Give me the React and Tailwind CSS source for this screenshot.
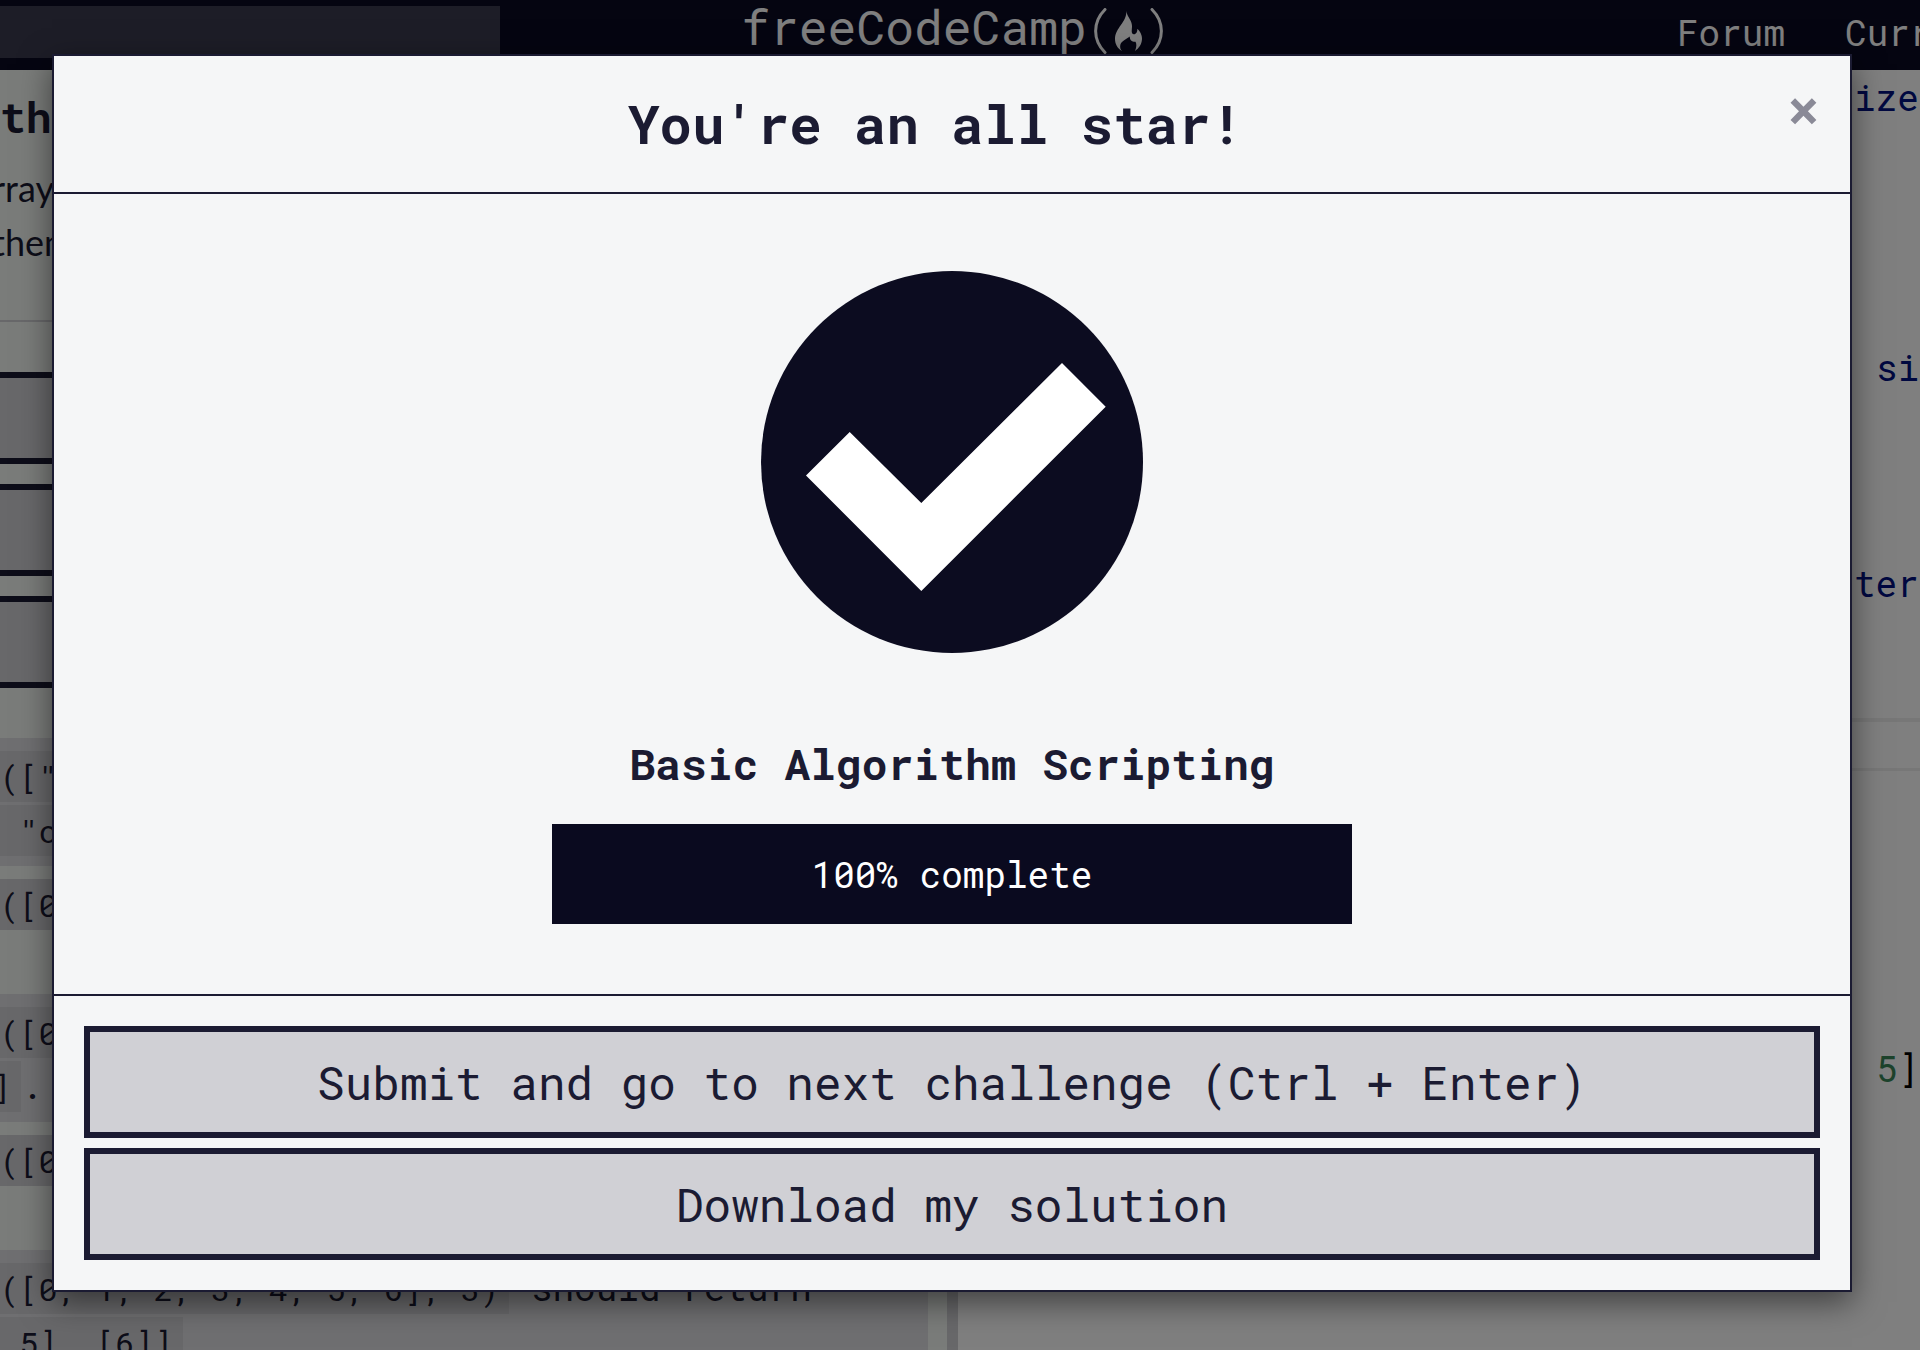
import React from 'react';

function FlameMark() {
  return (
    <svg viewBox="0 0 69 46" className="h-[46px] w-[69px]" aria-hidden="true">
      <g fill="none" stroke="#ffffff" strokeWidth="3" strokeLinecap="round">
        <path d="M11 1.5 C-1.5 14 -1.5 32 11 44.5" />
        <path d="M58 1.5 C70.5 14 70.5 32 58 44.5" />
      </g>
      <path
        fill="#ffffff"
        d="M32.3 3 C33 9 38 12 38 18 C38 22 36.8 25.5 39.5 26.2 C42 26.5 43.5 24 43.3 20.7 C46 23 48.2 27 48 31 C47.7 36.5 45 40 41 43 C42.6 39 42.8 36 41.5 33.8 C38 34 35.6 32 35.8 28.5 C32 31.5 27 33.5 26.3 37 C25.8 39.5 26.5 41.5 28 43 C23.5 40.5 21 36 21 31 C21 20 33 14 32.3 3 Z"
      />
    </svg>
  );
}

function CheckMark() {
  return (
    <svg viewBox="0 0 382 382" className="size-[382px]" role="img" aria-label="Passed">
      <circle cx="191" cy="191" r="191" fill="#0c0c20" />
      <path fill="#ffffff" d="M45 204.5 L88.7 161 L160.3 232 L301 92 L344.7 135.7 L160.3 320 Z" />
    </svg>
  );
}

function Code({ children }) {
  return <code className='bg-[#d0d0d5] py-1 pr-[10px] font-["Roboto_Mono","Liberation_Mono",monospace] text-[32px] leading-none'>{children}</code>;
}

function TestCase({ shaded, children }) {
  return (
    <li className={shaded ? 'min-h-[128px] bg-[#dfdfe2] py-[10px]' : 'min-h-[128px] py-[10px]'}>{children}</li>
  );
}

function Header() {
  return (
    <header className="grid h-[70px] shrink-0 grid-cols-[500px_1fr_516px] items-start bg-[#0a0a23] text-white">
      <div className="pt-[6px]">
        <input type="search" aria-label="Search" className="block h-[52px] w-full bg-[#3b3b4f]" />
      </div>
      <a href="#home" className="flex items-start justify-center gap-[7px]">
        <span className="text-[48px] leading-[54px]">freeCodeCamp</span>
        <span className="pt-2">
          <FlameMark />
        </span>
      </a>
      <nav className="flex gap-[60px] overflow-hidden pl-[273px] leading-[64px]">
        <a href="#forum">Forum</a>
        <a href="#curriculum">Curriculum</a>
      </nav>
    </header>
  );
}

function Instructions() {
  return (
    <section className="min-w-0 flex-1 overflow-hidden bg-[#f5f8f5] pr-[19px]">
      <h1 className="pt-5 text-[43px] font-bold">th</h1>
      <p className='-ml-2 mt-[17px] font-["Lato",sans-serif]'>
        rray
        <br />
        them
      </p>
      <hr className="mt-[51px] border-t-2 border-[#d0d0d5]" />
      <div className="my-[50px] flex flex-col gap-5">
        <button type="button" aria-label="Run the tests" className="h-[92px] border-y-[6px] border-[#1b1b32] bg-[#d0d0d5]" />
        <button type="button" aria-label="Reset all code" className="h-[92px] border-y-[6px] border-[#1b1b32] bg-[#d0d0d5]" />
        <button type="button" aria-label="Get help" className="h-[92px] border-y-[6px] border-[#1b1b32] bg-[#d0d0d5]" />
      </div>
      <ul className="whitespace-pre">
        <TestCase shaded>
          <Code>{'(["a'}</Code>
          <br />
          <Code>{' "c"'}</Code>
        </TestCase>
        <TestCase>
          <Code>{'([0,'}</Code>
        </TestCase>
        <TestCase shaded>
          <Code>{'([0,'}</Code>
          <br />
          <span className="-ml-2">
            <Code>]</Code>.
          </span>
        </TestCase>
        <TestCase>
          <Code>{'([0,'}</Code>
        </TestCase>
        <TestCase shaded>
          <Code>{'([0, 1, 2, 3, 4, 5, 6], 3)'}</Code>
          {' should return'}
          <br />
          <Code>{' 5], [6]]'}</Code>.
        </TestCase>
      </ul>
    </section>
  );
}

function Editor() {
  return (
    <section className="flex w-[962px] shrink-0 flex-col overflow-hidden bg-white text-[#001080]">
      <div className="h-[648px] shrink-0 pl-[896px]">
        <p>ize</p>
        <p className="mt-[216px] pl-[22px]">si</p>
        <p className="mt-[162px]">ter</p>
      </div>
      <div className="h-[53px] shrink-0 border-t-4 border-b-[3px] border-[#eeeeee]" />
      <div className="pt-[270px] pl-[918px]">
        <p className="text-black">
          <span className="text-[#3a8658]">5</span>]
        </p>
      </div>
    </section>
  );
}

function CompletionDialog() {
  return (
    <div
      role="dialog"
      aria-modal="true"
      aria-labelledby="dialog-title"
      className="border-2 border-[#1b1b32] bg-[#f5f6f7] shadow-[0_10px_30px_rgba(0,0,0,0.5)]"
    >
      <div className="flex items-start border-b-2 border-[#1b1b32] px-[30px] pt-[29px] pb-[31px]">
        <h2 id="dialog-title" className="flex-1 text-center text-[54px] leading-[76px] font-bold">
          You're an all star!
        </h2>
        <button type="button" aria-label="Close" className="w-[34px] text-center text-[56px] leading-[46px] font-bold text-[#8a8a97]">
          ×
        </button>
      </div>
      <div className="flex flex-col items-center border-b-2 border-[#1b1b32] pt-[77px] pb-[70px]">
        <CheckMark />
        <h3 className="mt-[84px] text-[43px] font-bold">Basic Algorithm Scripting</h3>
        <div
          role="progressbar"
          aria-valuenow={100}
          aria-label="Block progress"
          className="mt-[33px] w-[800px] max-w-full bg-[#0a0a1f] text-center leading-[100px] text-white"
        >
          100% complete
        </div>
      </div>
      <div className="flex flex-col gap-[10px] p-[30px] text-[46px] leading-[100px]">
        <button type="button" className="border-[6px] border-[#1b1b32] bg-[#d0d0d5]">
          Submit and go to next challenge (Ctrl + Enter)
        </button>
        <button type="button" className="border-[6px] border-[#1b1b32] bg-[#d0d0d5]">
          Download my solution
        </button>
      </div>
    </div>
  );
}

export default function App() {
  return (
    <div className='relative flex h-screen flex-col overflow-hidden font-["Roboto_Mono","Liberation_Mono",monospace] text-[36px] leading-[54px] text-[#1b1b32]'>
      <Header />
      <main className="flex min-h-0 flex-1">
        <Instructions />
        <div className="w-[11px] shrink-0 bg-[#d0d0d5]" />
        <Editor />
      </main>
      <div className="absolute inset-0 bg-black/50 pt-[54px] pr-[68px] pl-[52px]">
        <CompletionDialog />
      </div>
    </div>
  );
}
